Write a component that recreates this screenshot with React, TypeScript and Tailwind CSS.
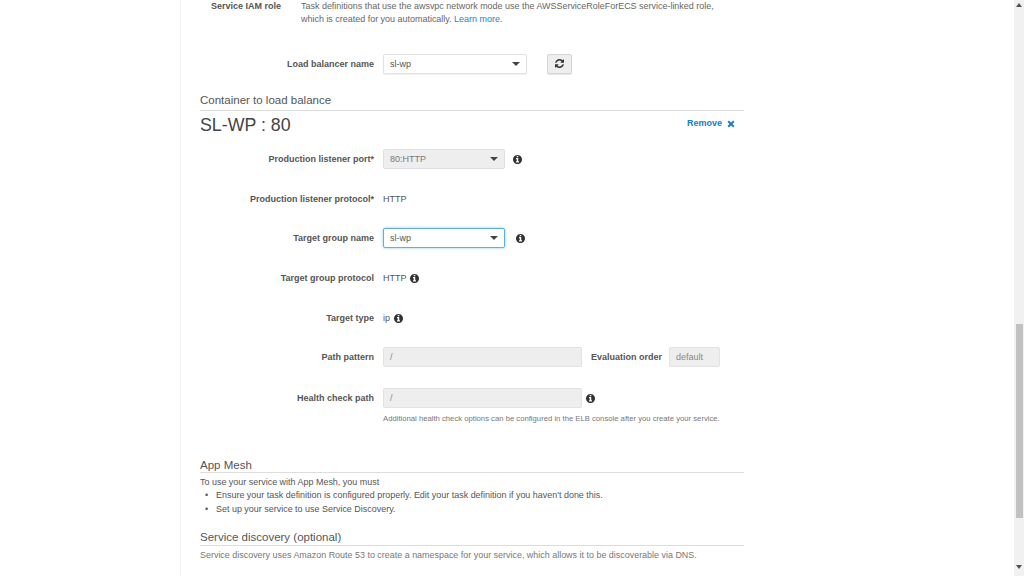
import React from 'react';

// FontAwesome 4 style glyphs
const InfoIcon = ({ className = '' }: { className?: string }) => (
  <svg viewBox="0 0 1536 1536" className={`w-[9px] h-[9px] text-[#333] fill-current shrink-0 ${className}`}>
    <path d="M1024 1248v-160q0-14-9-23t-23-9h-96V544q0-14-9-23t-23-9H544q-14 0-23 9t-9 23v160q0 14 9 23t23 9h96v320h-96q-14 0-23 9t-9 23v160q0 14 9 23t23 9h448q14 0 23-9t9-23zM896 352V192q0-14-9-23t-23-9H672q-14 0-23 9t-9 23v160q0 14 9 23t23 9h192q14 0 23-9t9-23zm640 416q0 209-103 385.500T1153.500 1433 768 1536t-385.500-103T103 1153.500 0 768t103-385.500T382.500 103 768 0t385.500 103T1433 382.500 1536 768z" />
  </svg>
);

const RefreshIcon = () => (
  <svg viewBox="0 0 1536 1536" className="w-[9px] h-[9px] text-[#333] fill-current">
    <path d="M1511 928q0 5-1 7-64 268-268 434.500T764 1536q-146 0-282.500-55T238 1324l-129 129q-19 19-45 19t-45-19-19-45V960q0-26 19-45t45-19h448q26 0 45 19t19 45-19 45l-137 137q71 66 161 102t187 36q134 0 250-65t186-179q11-17 53-117 8-23 30-23h192q13 0 22.500 9.500t9.500 22.500zm25-800v448q0 26-19 45t-45 19h-448q-26 0-45-19t-19-45 19-45l138-138Q969 256 768 256q-134 0-250 65T332 500q-11 17-53 117-8 23-30 23H50q-13 0-22.500-9.500T18 608v-7q65-268 270-434.500T768 0q146 0 284 55.500T1297 212l130-129q19-19 45-19t45 19 19 45z" />
  </svg>
);

const Caret = () => (
  <span className="w-0 h-0 border-x-[4px] border-x-transparent border-t-[4px] border-t-[#444] shrink-0" />
);

const Row = ({ label, children, className = '' }: { label: string; children: React.ReactNode; className?: string }) => (
  <div className={`flex items-center h-[20px] ${className}`}>
    <div className="w-[183px] text-right text-[9px] font-bold text-[#555] pr-[9px] shrink-0 leading-[14px]">{label}</div>
    {children}
  </div>
);

const SectionTitle = ({ children, className = 'leading-[16px] pb-[2px]' }: { children: React.ReactNode; className?: string }) => (
  <div className={`text-[11.500px] text-[#555] border-b border-[#ddd] ${className}`}>{children}</div>
);

const Select = ({ value, w, variant = 'normal' }: { value: string; w: string; variant?: 'normal' | 'disabled' | 'focus' }) => {
  const look =
    variant === 'disabled'
      ? 'bg-[#eeeeee] border-[#e0e0e0] text-[#777]'
      : variant === 'focus'
        ? 'bg-white border-[#5fb0e4] shadow-[0_0_3px_#8cc8f0] text-[#555]'
        : 'bg-white border-[#e2e2e2] shadow-[0_1px_1px_rgba(0,0,0,0.06)] text-[#555]';
  return (
    <div className={`h-[20px] ${w} rounded-[2px] border flex items-center justify-between pl-[6px] pr-[6px] text-[9px] ${look}`}>
      <span className="pt-[1px]">{value}</span>
      <Caret />
    </div>
  );
};

const DisabledInput = ({ value, w }: { value: string; w: string }) => (
  <div className={`h-[20px] ${w} rounded-[2px] border border-[#e2e2e2] bg-[#eeeeee] flex items-center pl-[6px] pt-[1px] text-[9px] text-[#888]`}>
    {value}
  </div>
);

export default function App() {
  return (
    <div className="h-[576px] w-[1024px] overflow-hidden bg-white flex font-['Liberation_Sans',Arial,sans-serif] text-[#555]">
      <div className="w-[180px] shrink-0 border-r border-[#eeeeee] box-content" />

      <main className="w-[544px] ml-[19px] shrink-0 flex flex-col">
        {/* Service IAM role */}
        <div className="flex h-[27px]">
          <div className="w-[81px] text-right text-[9px] font-bold leading-[13px] shrink-0">Service IAM role</div>
          <div className="ml-[20px] text-[8.960px] leading-[13px] text-[#666]">
            Task definitions that use the awsvpc network mode use the AWSServiceRoleForECS service-linked role,
            <br />
            which is created for you automatically. <span className="text-[#2a80c2]">Learn more.</span>
          </div>
        </div>

        <Row label="Load balancer name" className="mt-[27px]">
          <Select value="sl-wp" w="w-[144px]" />
          <button className="ml-[20px] -mt-[1px] w-[25px] h-[20px] rounded-[2px] border border-[#d5d5d5] bg-[#eeeeee] shadow-[0_1px_1px_rgba(0,0,0,0.1)] flex items-center justify-center">
            <RefreshIcon />
          </button>
        </Row>

        <div className="mt-[18px]">
          <SectionTitle>Container to load balance</SectionTitle>
        </div>

        <div className="flex items-center justify-between h-[26px] mt-[1px] pr-[9px]">
          <span className="text-[17.800px] text-[#444] leading-[26px]">SL-WP : 80</span>
          <span className="text-[9px] font-bold text-[#1a7cc2] flex items-center gap-[5px] -mt-[2px]">
            Remove
            <svg viewBox="0 0 10 10" className="w-[8px] h-[8px] -mt-[1px]">
              <path d="M1.500 1.500 8.500 8.500M8.500 1.500 1.500 8.500" stroke="#1a7cc2" strokeWidth="2.400" />
            </svg>
          </span>
        </div>

        <Row label="Production listener port*" className="mt-[11px]">
          <Select value="80:HTTP" w="w-[122px]" variant="disabled" />
          <InfoIcon className="ml-[8px]" />
        </Row>

        <Row label="Production listener protocol*" className="mt-[20px]">
          <span className="text-[9px] text-[#555] pt-[1px]">HTTP</span>
        </Row>

        <Row label="Target group name" className="mt-[19px]">
          <Select value="sl-wp" w="w-[122px]" variant="focus" />
          <InfoIcon className="ml-[11px]" />
        </Row>

        <Row label="Target group protocol" className="mt-[20px]">
          <span className="text-[9px] text-[#555] pt-[1px]">HTTP</span>
          <InfoIcon className="ml-[3px]" />
        </Row>

        <Row label="Target type" className="mt-[20px]">
          <span className="text-[9px] text-[#555] pt-[1px]">ip</span>
          <InfoIcon className="ml-[4px]" />
        </Row>

        <Row label="Path pattern" className="mt-[19px]">
          <DisabledInput value="/" w="w-[199px]" />
          <span className="ml-[9px] pt-[1px] text-[9px] font-bold">Evaluation order</span>
          <div className="ml-[7px]">
            <DisabledInput value="default" w="w-[51px]" />
          </div>
        </Row>

        <Row label="Health check path" className="mt-[21px]">
          <DisabledInput value="/" w="w-[199px]" />
          <InfoIcon className="ml-[4px]" />
        </Row>

        <div className="ml-[183px] mt-[5px] text-[7.700px] leading-[12px] text-[#777] whitespace-nowrap">
          Additional health check options can be configured in the ELB console after you create your service.
        </div>

        <div className="mt-[33px]">
          <SectionTitle className="leading-[14px]">App Mesh</SectionTitle>
        </div>
        <div className="text-[8.960px] leading-[13px] text-[#555] mt-[3px]">To use your service with App Mesh, you must</div>
        <ul className="text-[8.960px] leading-[13px] text-[#555]">
          <li className="flex">
            <span className="w-[16px] pl-[5px]">•</span>Ensure your task definition is configured properly. Edit your task definition if you haven't done this.
          </li>
          <li className="flex mt-[1px]">
            <span className="w-[16px] pl-[5px]">•</span>Set up your service to use Service Discovery.
          </li>
        </ul>

        <div className="mt-[14px]">
          <SectionTitle className="leading-[14px] pb-[1px]">Service discovery (optional)</SectionTitle>
        </div>
        <div className="text-[8.950px] leading-[13px] text-[#777] mt-[3px]">
          Service discovery uses Amazon Route 53 to create a namespace for your service, which allows it to be discoverable via DNS.
        </div>
      </main>

      <div className="flex-1" />
      {/* scrollbar */}
      <div className="w-[10px] bg-[#f1f1f1] flex flex-col items-center relative">
        <span className="mt-[3px] w-0 h-0 border-x-[3.500px] border-x-transparent border-b-[4px] border-b-[#505050]" />
        <div className="mt-[317px] w-[7px] h-[194px] bg-[#c1c1c1]" />
        <span className="mt-[47px] w-0 h-0 border-x-[3.500px] border-x-transparent border-t-[4px] border-t-[#505050]" />
      </div>
    </div>
  );
}
